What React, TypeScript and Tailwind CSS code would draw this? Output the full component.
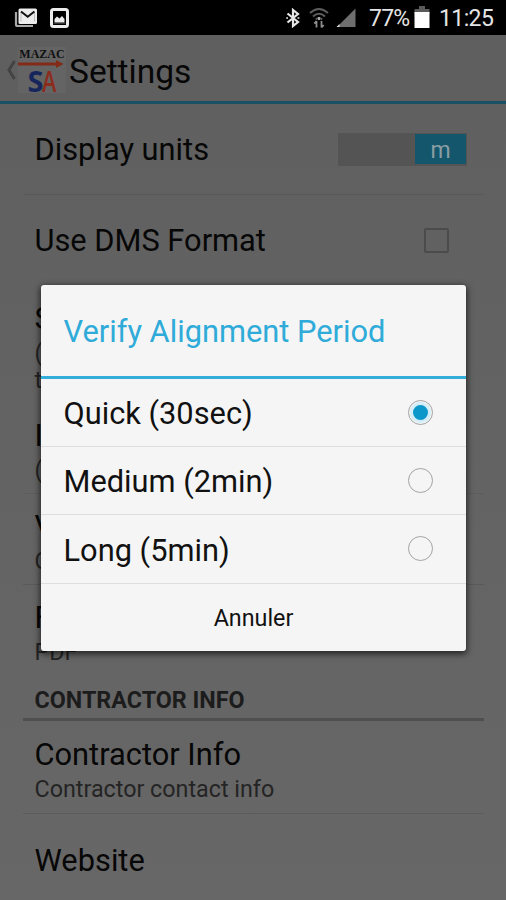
import { useState } from 'react'
import type { ReactNode } from 'react'

const periods = ["Quick (30sec)", "Medium (2min)", "Long (5min)"]

const StatusBar = () => {
    return <div className="flex h-[35px] shrink-0 items-center bg-black pl-[14px] pr-[13px] text-[#e4e4e4]">
        <svg width="24" height="20" viewBox="0 0 24 20" fill="none">
            <path d="M2 4V16.500Q2 18 3.500 18H19" stroke="#a8a8a8" strokeWidth="2.200" />
            <rect x="4.500" y="0.500" width="18.500" height="15.500" rx="1.500" fill="#ececec" />
            <path d="M7 4V13.500M20.500 4V13.500" stroke="#bdbdbd" strokeWidth="1" />
            <path d="M7 3.500L13.700 8.700L20.400 3.500" stroke="#111" strokeWidth="2" />
        </svg>
        <svg className="ml-[12px]" width="19" height="20" viewBox="0 0 19 20" fill="none">
            <rect x="1.500" y="1.500" width="16" height="17" rx="2" stroke="#ececec" strokeWidth="3" />
            <path d="M4.500 14.500V11L7 8.500L9.500 10.500L12 8L14.500 11V14.500Z" fill="#ececec" />
            <path d="M3.500 15.500H15.500" stroke="#333" strokeWidth="1" />
        </svg>
        <div className="ml-auto flex items-center">
            <svg className="-mr-px" width="14" height="20" viewBox="0 0 14 20" fill="none" stroke="#e8e8e8" strokeWidth="2.200">
                <path d="M1.500 5.500L12 14L7 18V2L12 6L1.500 14.500" />
                <path d="M11.500 10H13.400M0.200 10H2" strokeWidth="1.500" />
            </svg>
            <svg className="ml-[10px]" width="20" height="22" viewBox="0 0 20 22" fill="none" stroke="#5c5c5c" strokeWidth="2">
                <path d="M1 6Q10 -2 19 6" />
                <path d="M4 9.500Q10 4 16 9.500" />
                <path d="M6.800 12.500Q10 9.500 13.200 12.500" />
                <path d="M10 10V13" stroke="#aaa" />
                <path d="M7.500 20.500V14M5.300 16.500L7.500 14M12.500 14V20.500M14.700 18L12.500 20.500" stroke="#8c8c8c" strokeWidth="1.800" />
            </svg>
            <svg className="ml-[7px]" width="20" height="20" viewBox="0 0 20 20">
                <path d="M19.500 0.500V19H1Z" fill="#6e6e6e" />
                <path d="M3.500 16V19H0.500Z" fill="#ddd" />
            </svg>
            <span className="ml-[13px] mt-[2px] w-[41px] whitespace-nowrap text-[23px] leading-none tracking-[-0.8px]">77%</span>
            <svg className="ml-[4px] -mt-px" width="16" height="24" viewBox="0 0 16 24">
                <path d="M5 1H11V4H15.500V9H0.500V4H5Z" fill="#5a5a5a" />
                <rect x="0.500" y="7" width="15" height="16" fill="#fff" />
            </svg>
            <span className="ml-[9px] mt-[2px] w-[54px] whitespace-nowrap text-[23px] leading-none tracking-[-0.6px]">11:25</span>
        </div>
    </div>
}

const ActionBar = () => {
    return <div className="flex h-[69px] shrink-0 items-center border-b-3 border-[#1b4f63] bg-[#5f5f5f] pl-[6px]">
        <svg className="mt-[3px]" width="12" height="24" viewBox="0 0 12 24" fill="none">
            <path d="M8.500 3L3 12L8.500 21" stroke="#434343" strokeWidth="3" />
        </svg>
        <div className="mt-[3px] flex h-[46px] w-[48px] flex-col items-center bg-[#646464]">
            <span className="mt-[2px] whitespace-nowrap font-['Liberation_Serif',serif] text-[12px] font-bold leading-[11px] text-[#111]">MAZAC</span>
            <svg className="-ml-[3px] shrink-0" width="46" height="8" viewBox="0 0 46 8">
                <path d="M0 2.500H38V0L45.500 4L38 8V5.500H0Z" fill="#832a18" />
            </svg>
            <div className="flex font-['Open_Sans',sans-serif] text-[29px] leading-[26px]">
                <span className="-mr-px font-bold text-[#16265c]">S</span>
                <span className="w-[14px] origin-left scale-x-75 font-semibold text-[#8c2c1d]">A</span>
            </div>
        </div>
        <h1 className="ml-[3px] mt-[8px] whitespace-nowrap text-[33.500px] leading-none text-[#070707]">Settings</h1>
    </div>
}

const Row = ({ title, summary, className, children }: { title: string, summary?: string[], className: string, children?: ReactNode }) => {
    return <div className={"ml-[23px] mr-[22px] flex shrink-0 items-center border-b pl-[11.500px] pr-[17px] " + className}>
        <div className="flex-1 pt-px">
            <div className="text-[30.800px] leading-[37px] text-[#070707]">{title}</div>
            {summary?.map((line, i) => <div key={i} className="relative top-[3px] text-[23.300px] leading-[27px] text-[#242424]">{line}</div>)}
        </div>
        {children}
    </div>
}

const PeriodDialog = () => {
    const [selected, setSelected] = useState(0)

    return <div className="absolute inset-x-0 top-[285px] flex justify-center pl-px">
        <div className="h-[366px] w-[425px] rounded-[3px] bg-[#f5f5f5] shadow-[0_2px_6px_1px_rgba(0,0,0,0.65)]">
            <h2 className="flex h-[94px] items-center border-b-3 border-[#33aedb] pl-[22.500px] pt-[4px] text-[30.800px] text-[#2fabd9]">Verify Alignment Period</h2>
            {periods.map((period, i) =>
                <button key={period} onClick={() => setSelected(i)} className="flex h-[68.500px] w-full items-center justify-between border-b border-[#dedede] pl-[22.500px] pr-[33px] text-[30.800px] text-[#111] first-of-type:h-[67.500px]">
                    <span className="pt-[4px]">{period}</span>
                    <span className="flex size-[25px] items-center justify-center rounded-full border-[1.500px] border-[#a3a3a3]">
                        {selected === i && <span className="size-[21px] rounded-full border-3 border-[#d3eef8] bg-[#0b97c9]"></span>}
                    </span>
                </button>
            )}
            <button className="h-[67px] w-full pt-[3px] text-[23.300px] text-[#111]">Annuler</button>
        </div>
    </div>
}

const App = () => {
    return <div className="relative flex h-[900px] w-full flex-col overflow-hidden bg-linear-to-b from-[#5f5f5f] to-[#676767] font-[Roboto,sans-serif]">
        <StatusBar />
        <ActionBar />
        <Row title="Display units" className="h-[91px] border-[#595959]">
            <div className="flex h-[33px] w-[129px] items-center justify-end bg-[#545454] pr-px">
                <div className="h-[30px] w-[51px] bg-[#14566b] text-center text-[23px] leading-[33px] text-[#8a9da4]">m</div>
            </div>
        </Row>
        <Row title="Use DMS Format" className="h-[91px] border-transparent">
            <div className="mr-[18px] size-[25px] rounded-[2px] border-2 border-[#4b4b4b]"></div>
        </Row>
        <Row title="S" summary={["(", "t"]} className="h-[118px] border-transparent" />
        <Row title="I" summary={["("]} className="h-[90px] border-[#5c5c5c]" />
        <Row title="V" summary={["Q"]} className="h-[91px] border-[#5a5a5a]" />
        <Row title="F" summary={["PDF"]} className="h-[91px] border-transparent" />
        <h3 className="ml-[23px] mr-[22px] flex h-[45px] shrink-0 items-center border-b-3 border-[#4f4f4f] pl-[11.500px] pt-[7px] text-[23.300px] font-bold text-[#1c1c1c]">CONTRACTOR INFO</h3>
        <Row title="Contractor Info" summary={["Contractor contact info"]} className="h-[93px] border-[#5b5b5b]" />
        <Row title="Website" className="h-[92px] border-transparent" />
        <PeriodDialog />
    </div>
}

export default App
